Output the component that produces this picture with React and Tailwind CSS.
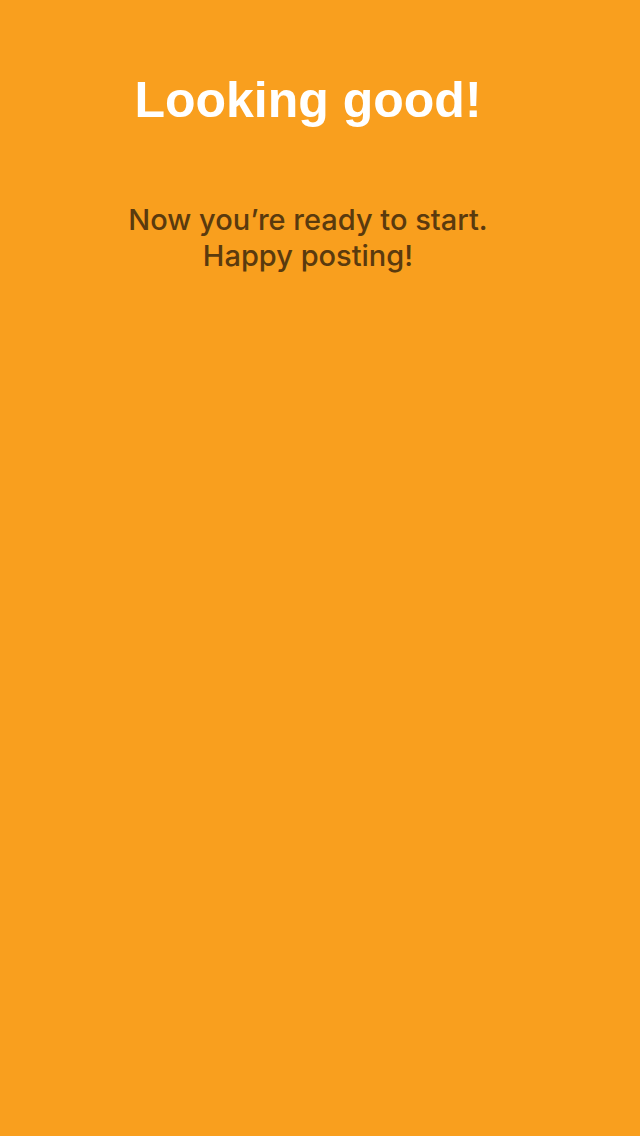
import React from "react";

export default function App() {
  return (
    <div
      className="w-[640px] h-[1136px] bg-[#f99f1e] flex flex-col items-center pr-[24px]"
      style={{ fontFamily: '"Liberation Sans", Arial, sans-serif' }}
    >
      <h1 className="mt-[75px] text-[50px] leading-[50px] font-bold text-white">
        Looking good!
      </h1>
      <p className="mt-[77px] font-['Inter',_'Liberation_Sans',_sans-serif] font-medium text-[29px] leading-[36px] text-center text-[#5a3a0e]">
        Now you’re ready to start.
        <br />
        Happy posting!
      </p>
    </div>
  );
}
